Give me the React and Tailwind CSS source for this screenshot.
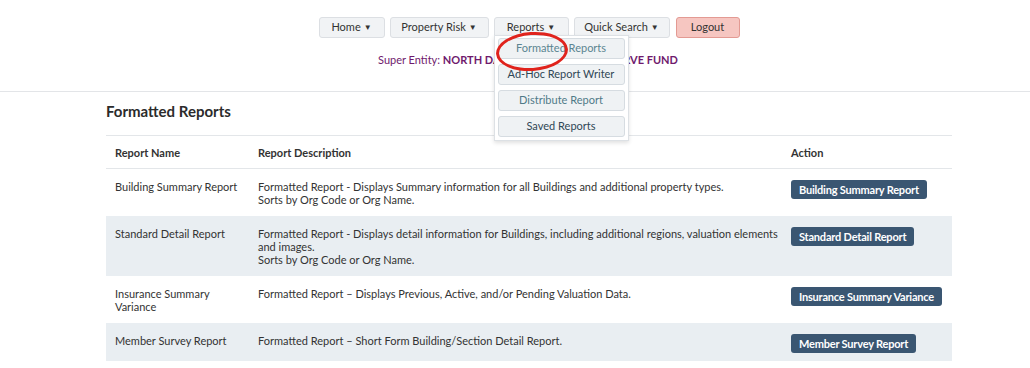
import { useState } from 'react'

const rows = [
  {
    name: 'Building Summary Report',
    desc: [
      'Formatted Report - Displays Summary information for all Buildings and additional property types.',
      'Sorts by Org Code or Org Name.',
    ],
    action: 'Building Summary Report',
  },
  {
    name: 'Standard Detail Report',
    desc: [
      'Formatted Report - Displays detail information for Buildings, including additional regions, valuation elements and images.',
      'Sorts by Org Code or Org Name.',
    ],
    action: 'Standard Detail Report',
  },
  {
    name: 'Insurance Summary Variance',
    desc: ['Formatted Report – Displays Previous, Active, and/or Pending Valuation Data.'],
    action: 'Insurance Summary Variance',
  },
  {
    name: 'Member Survey Report',
    desc: ['Formatted Report – Short Form Building/Section Detail Report.'],
    action: 'Member Survey Report',
  },
]

const menu = [
  { label: 'Formatted Reports', tone: 'text-[#5b8591]' },
  { label: 'Ad-Hoc Report Writer', tone: 'text-[#2f4756]' },
  { label: 'Distribute Report', tone: 'text-[#4f7a88]' },
  { label: 'Saved Reports', tone: 'text-[#2f4756]' },
]

function NavButton({ label, caret = true, className = '' }) {
  return (
    <button
      type="button"
      className={`h-[21px] rounded-[3px] border text-[11px] text-[#333] flex items-center justify-center gap-[3px] ${className}`}
    >
      {label}
      {caret && <span className="text-[8px] leading-none -mt-[2px]">▼</span>}
    </button>
  )
}

export default function App() {
  const [open] = useState(true)

  return (
    <div className="w-[1030px] h-[368px] bg-white overflow-hidden font-['Lato','Liberation_Sans',sans-serif] text-[#333]">
      <header className="border-b border-[#e3e5e8] h-[92px]">
        <nav className="pt-[17px] flex justify-center gap-[5px] pl-[28px]">
          <NavButton label="Home" className="w-[66px] bg-[#f1f3f5] border-[#dcdfe3]" />
          <NavButton label="Property Risk" className="w-[99px] bg-[#f1f3f5] border-[#dcdfe3]" />
          <div className="relative">
            <NavButton label="Reports" className="w-[75px] bg-[#f1f3f5] border-[#dcdfe3]" />
            {open && (
              <div className="absolute left-0 top-[18px] z-20 w-[135px] h-[106px] bg-white border border-[#dde1e5] shadow-[0_2px_4px_rgba(0,0,0,0.12)] px-[3px] pt-[2px] flex flex-col gap-[5px]">
                {menu.map((m) => (
                  <div
                    key={m.label}
                    className={`h-[21px] rounded-[3px] border border-[#d6dce1] bg-[#eff2f4] text-[11px] flex items-center justify-center ${m.tone}`}
                  >
                    {m.label}
                  </div>
                ))}
                <div className="absolute left-[1px] top-[-4px] w-[72px] h-[39px] rounded-[50%] border-[3px] border-[#e0231c] rotate-[-4deg]" />
              </div>
            )}
          </div>
          <NavButton label="Quick Search" className="w-[96px] bg-[#f1f3f5] border-[#dcdfe3]" />
          <NavButton
            label="Logout"
            caret={false}
            className="w-[64px] ml-[1px] bg-[#f6c6c1] border-[#e39a93] text-[#3a2a2a]"
          />
        </nav>
        <p className="mt-[14px] text-center text-[11px] leading-[15px] text-[#6f1a6d] pl-[26px]">
          Super Entity: <span className="font-bold">NORTH DAKOTA INSURANCE RESERVE FUND</span>
        </p>
      </header>

      <main className="w-[846px] ml-[106px]">
        <h1 className="mt-[9px] text-[15px] font-bold text-[#2b2b2b] h-[34px] leading-[20px]">
          Formatted Reports
        </h1>
        <table className="w-full text-[11px] leading-[13px] border-collapse">
          <thead>
            <tr className="border-t border-b border-[#e3e6e9] h-[33px]">
              <th className="text-left font-bold pl-[9px] w-[152px]">Report Name</th>
              <th className="text-left font-bold">Report Description</th>
              <th className="text-left font-bold w-[161px]">Action</th>
            </tr>
          </thead>
          <tbody>
            {rows.map((r, i) => (
              <tr key={r.name} className={i % 2 === 1 ? 'bg-[#e9eef2]' : 'bg-white'}>
                <td className="align-top pl-[9px] pr-[10px] pt-[11px] pb-[10px]">{r.name}</td>
                <td className="align-top pt-[11px] pb-[10px] pr-[2px]">
                  {r.desc.map((d) => (
                    <div key={d}>{d}</div>
                  ))}
                </td>
                <td className="align-top pt-[11px] pb-[8px]">
                  <button
                    type="button"
                    className="h-[19px] px-[8px] rounded-[3px] bg-[#3a5672] text-white font-bold text-[11px] tracking-[-0.2px] whitespace-nowrap"
                  >
                    {r.action}
                  </button>
                </td>
              </tr>
            ))}
          </tbody>
        </table>
      </main>
    </div>
  )
}
